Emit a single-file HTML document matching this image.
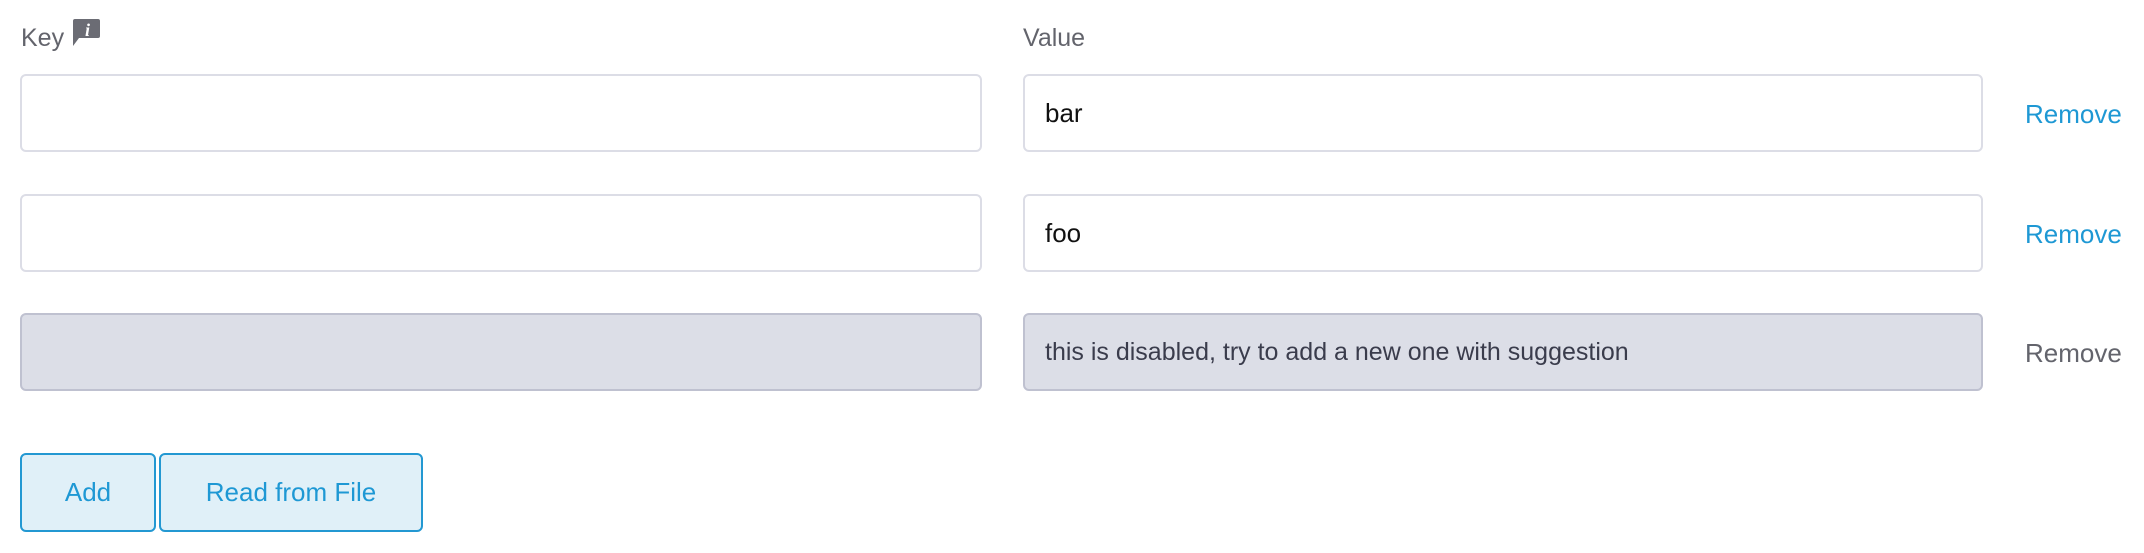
<!DOCTYPE html>
<html><head><meta charset="utf-8"><style>
body{margin:0;width:2144px;height:553px;background:#fff;font-family:"Liberation Sans",sans-serif;position:relative;overflow:hidden}
.a{position:absolute}
.lbl{color:#63646c;font-size:25px}
.in{position:absolute;box-sizing:border-box;border:2px solid #dcdde6;border-radius:6px;background:#fff;font-size:26px;color:#111;padding-left:20px;display:flex;align-items:center;height:78px}
.dis{background:#dcdee7;border-color:#bfc1d0;color:#3a3c4c;font-size:25px}
.rm{position:absolute;left:2025px;font-size:26px;color:#1e98d4}
.btn{position:absolute;top:453px;height:79px;box-sizing:border-box;border:2px solid #2398d2;border-radius:6px;background:#e0f0f8;color:#1e98d4;font-size:26px;display:flex;align-items:center;justify-content:center}
</style></head><body>
<div class="a lbl" style="left:21px;top:24px">Key</div>
<svg class="a" style="left:72px;top:19px" width="29" height="28" viewBox="0 0 29 28"><path d="M3 0H26Q28 0 28 2V17Q28 19 26 19H7L1 27V2Q1 0 3 0Z" fill="#6b6c74"/><text x="13" y="17" font-family="Liberation Serif,serif" font-style="italic" font-weight="bold" font-size="18" fill="#fff">i</text></svg>
<div class="a lbl" style="left:1023px;top:24px">Value</div>

<div class="in" style="left:20px;top:74px;width:962px"></div>
<div class="in" style="left:1023px;top:74px;width:960px">bar</div>
<div class="rm" style="top:99px">Remove</div>

<div class="in" style="left:20px;top:194px;width:962px"></div>
<div class="in" style="left:1023px;top:194px;width:960px">foo</div>
<div class="rm" style="top:219px">Remove</div>

<div class="in dis" style="left:20px;top:313px;width:962px"></div>
<div class="in dis" style="left:1023px;top:313px;width:960px">this is disabled, try to add a new one with suggestion</div>
<div class="rm" style="top:338px;color:#63646c">Remove</div>

<div class="btn" style="left:20px;width:136px">Add</div>
<div class="btn" style="left:159px;width:264px">Read from File</div>
</body></html>
